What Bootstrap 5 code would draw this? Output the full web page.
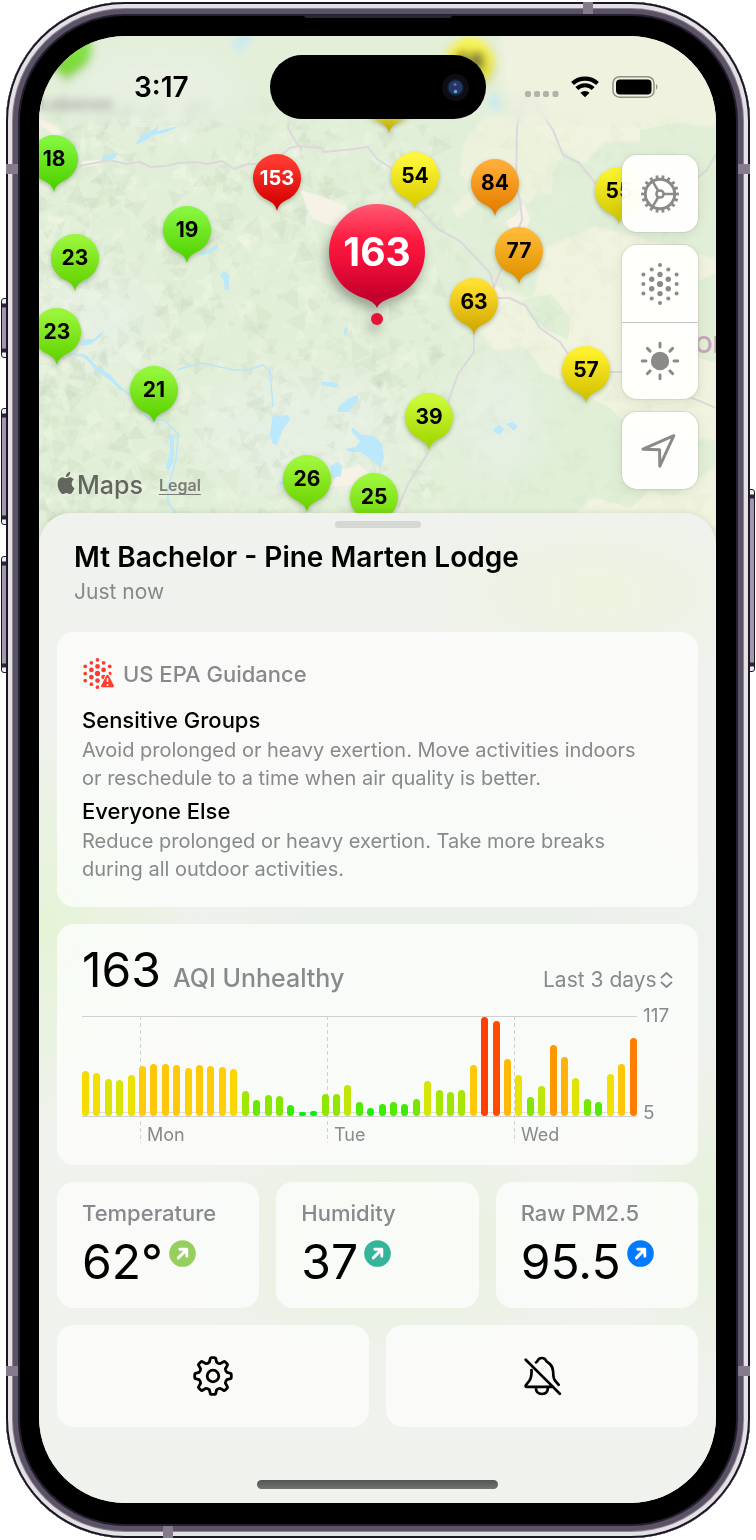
<!DOCTYPE html>
<html lang="en">
<head>
<meta charset="utf-8">
<meta name="viewport" content="width=device-width, initial-scale=1">
<title>Air quality map</title>
<link href="https://cdn.jsdelivr.net/npm/bootstrap@5.3.0/dist/css/bootstrap.min.css" rel="stylesheet">
<style>
  body { font-family: Inter, "Liberation Sans", sans-serif; background: #fff; color: #000; }
  button { font-family: inherit; }

  /* Device */
  .device {
    margin: 2px 6px; padding: 34px 34px 35px 33px; border-radius: 119px; background: #000;
    box-shadow: inset 0 0 0 2px #1c1628, inset 0 0 0 6px #e4e1e3, inset 0 0 0 7px #8d8494,
      inset 0 0 0 12px #5b5265, inset 0 0 0 14px #241f2e;
  }
  .screen { border-radius: 86px; overflow: hidden; background: #eff2ec; isolation: isolate; }
  .side-key {
    position: absolute; width: 6px; border: 1px solid #1c1628;
    background: linear-gradient(#eee 0 4px, #2a2434 5px 8px, #a29aaa 9px calc(100% - 9px), #2a2434 calc(100% - 8px) calc(100% - 5px), #eee calc(100% - 4px));
  }
  .key-left { left: -5px; border-radius: 3px 0 0 3px; }
  .key-right { right: -5px; border-radius: 0 3px 3px 0; }
  .key-action { top: 296px; height: 60px; }
  .key-up { top: 406px; height: 117px; }
  .key-down { top: 554px; height: 117px; }
  .key-power { top: 487px; height: 183px; }
  .band-v, .band-h { position: absolute; background: #857b8c; }
  .band-v { width: 12px; height: 10px; }
  .band-h { width: 10px; height: 12px; }
  .speaker { position: absolute; top: 13px; left: 50%; width: 148px; height: 3px; margin-left: -74px; background: #2b2732; border-radius: 0 0 4px 4px; }

  /* Map */
  .map-view { filter: saturate(1); } /* keeps the haze from sampling the bezel behind the screen */
  .map-art { position: absolute; top: 0; left: 0; width: 100%; height: calc(100% + 36px); }
  .pins { position: absolute; inset: 0; }
  .pin {
    position: absolute; width: 48px; height: 58px; margin: -24px 0 0 -24px; padding: 0; border: 0; background: none;
    font-size: 21px; line-height: 48px; font-weight: 700; color: #000; text-align: center;
    filter: drop-shadow(0 2px 2px rgba(60, 80, 50, .35));
  }
  .pin svg { position: absolute; top: 0; left: 0; width: 100%; height: 100%; overflow: visible; }
  .pin span { position: absolute; top: 0; left: 0; right: 0; }
  .pin.three { font-size: 20px; color: #fff; }
  .pin.selected { width: 96px; height: 124px; margin: -48px 0 0 -48px; font-size: 39px; line-height: 96px; color: #fff; filter: drop-shadow(-3px 7px 6px rgba(50, 60, 50, .42)); }
  .top-haze { position: absolute; top: 0; left: 0; right: 0; height: 92px; backdrop-filter: blur(4px); background: rgba(236, 241, 226, .2);
    -webkit-mask-image: linear-gradient(#000 85%, transparent); mask-image: linear-gradient(#000 85%, transparent); }
  .status { padding: 19px 57px 0; display: grid; grid-template-columns: minmax(0, 1fr) 216px minmax(0, 1fr); }
  .clock { font-size: 28px; font-weight: 600; line-height: 64px; padding-left: 38px; }
  .island { height: 64px; border-radius: 32px; background: #000; padding-right: 17px; }
  .lens { width: 27px; height: 27px; }
  .map-foot { padding: 36px 18px 24px; }
  .attribution { color: #63665f; line-height: 28px; margin-bottom: -10px; }
  .brand-word { font-size: 25px; font-weight: 500; padding-left: 2px; }
  .legal { font-size: 16px; font-weight: 600; color: #7b7e77; text-underline-offset: 3px; }
  .tools { width: 76px; gap: 13px; }
  .tool-box { background: rgba(255, 255, 253, .97); border-radius: 15px; box-shadow: 0 0 1px 1px rgba(170, 175, 160, .3), 0 3px 12px rgba(100, 110, 80, .14); overflow: hidden; }
  .tool { height: 77px; width: 100%; padding: 0; border: 0; background: none; color: #8a8a88; display: grid; place-items: center; }
  .tool + .tool { border-top: 1px solid #c6c7c4; }
  .tool svg { width: 42px; height: 42px; }

  /* Sheet */
  .sheet {
    border-radius: 32px 32px 0 0; padding: 8px 18px 14px; box-shadow: 0 0 6px rgba(80, 90, 70, .16);
    background:
      radial-gradient(ellipse 160px 200px at 0 42%, #e5f3d6, transparent),
      radial-gradient(ellipse 240px 120px at 52% 74%, #e8f2dc, transparent),
      radial-gradient(ellipse 110px 170px at 100% 71%, #e6f2db, transparent),
      radial-gradient(ellipse 190px 90px at 82% 8%, #eef3df, transparent),
      radial-gradient(ellipse 320px 220px at 60% 45%, #e8f1e8, transparent),
      #eff2ed;
  }
  .grabber { width: 86px; height: 7px; border: 0; padding: 0; border-radius: 4px; background: #d4d7d2; }
  .place { padding: 11px 17px 26px; }
  .place-name { font-size: 28px; font-weight: 600; line-height: 36px; margin: 0 0 3px; }
  .place-time { font-size: 21px; line-height: 28px; color: #86888a; }
  .stack { display: grid; gap: 17px; }
  .trio { display: grid; grid-template-columns: repeat(3, minmax(0, 1fr)); gap: 17px; }
  .duo { display: grid; grid-template-columns: repeat(2, minmax(0, 1fr)); gap: 17px; }
  .tile { background: rgba(253, 254, 252, .78); border: 0; border-radius: 17px; }
  .muted { color: #88898c; }
  .guide { padding: 26px 25px 24px; }
  .guide-head { font-size: 22px; font-weight: 500; line-height: 32px; margin: 0 0 16px; gap: 8px; }
  .guide h3 { font-size: 22px; font-weight: 500; line-height: 28px; margin: 0 0 2px; }
  .guide p { font-size: 20px; line-height: 28px; margin: 0 0 5px; padding-right: 20px; }
  .guide p:last-child { margin: 0; }
  .history { padding: 22px 25px; }
  .figure-lg { font-size: 48px; line-height: 48px; font-weight: 400; }
  .aqi-word { font-size: 25px; font-weight: 500; line-height: 32px; }
  .range { font-size: 21px; line-height: 26px; gap: 3px; }
  .range select { appearance: none; border: 0; background: none; padding: 0; color: inherit; font: inherit; }
  .plot-row { margin-top: 22px; display: grid; grid-template-columns: minmax(0, 1fr) 36px; }
  .plot { height: 127px; position: relative; }
  .bars { height: 101px; border-top: 1px solid #cfd0cf; border-bottom: 1px solid #cfd0cf; position: relative; }
  .bars::before { content: ""; position: absolute; left: 0; right: 0; bottom: 3px; border-top: 1px solid #dcdddc; }
  .bar { width: 7px; border-radius: 4px; position: relative; }
  .day { position: absolute; top: 0; bottom: 0; padding: 106px 0 0 7px; font-size: 18px; line-height: 26px; color: #88898c;
    background: repeating-linear-gradient(#d0d1d0 0 4px, transparent 4px 7px) 0 0 / 1px 100% no-repeat; }
  .scale { height: 117px; font-size: 19px; line-height: 20px; padding-left: 6px; margin-top: -10px; }
  .stat { padding: 17px 25px 22px; }
  .stat dt { font-size: 22px; line-height: 28px; font-weight: 500; margin-bottom: 11px; white-space: nowrap; }
  .stat dd { margin: 0; gap: 6px; }
  .trend { width: 27px; height: 27px; margin-top: 2px; }
  .action { height: 102px; color: #000; display: grid; place-items: center; }
  .home-bar { width: 241px; height: 9px; border-radius: 5px; background: linear-gradient(#535652, #71736f); margin: 53px auto 0; }
</style>
</head>
<body>
<svg width="0" height="0" class="position-absolute" aria-hidden="true">
  <defs>
    <symbol id="particles" viewBox="-21 -21 42 42">
      <g fill="currentColor">
        <circle r="3.1"/><circle cy="-9.6" r="2.7"/><circle cy="9.6" r="2.7"/>
        <circle cx="-8.3" cy="-4.8" r="2.7"/><circle cx="8.3" cy="-4.8" r="2.7"/><circle cx="-8.3" cy="4.8" r="2.7"/><circle cx="8.3" cy="4.8" r="2.7"/>
        <circle cy="-19" r="2"/><circle cy="19" r="2"/>
        <circle cx="-8.3" cy="-14.4" r="2"/><circle cx="8.3" cy="-14.4" r="2"/><circle cx="-8.3" cy="14.4" r="2"/><circle cx="8.3" cy="14.4" r="2"/>
        <circle cx="-16.6" cy="-9.6" r="2"/><circle cx="16.6" cy="-9.6" r="2"/><circle cx="-16.6" r="2"/><circle cx="16.6" r="2"/><circle cx="-16.6" cy="9.6" r="2"/><circle cx="16.6" cy="9.6" r="2"/>
      </g>
    </symbol>
    <symbol id="particles-bold" viewBox="-21 -21 42 42">
      <g fill="currentColor">
        <circle r="3.6"/><circle cy="-9.6" r="3.2"/><circle cy="9.6" r="3.2"/>
        <circle cx="-8.3" cy="-4.8" r="3.200"/><circle cx="8.3" cy="-4.8" r="3.200"/><circle cx="-8.3" cy="4.8" r="3.200"/><circle cx="8.3" cy="4.8" r="3.200"/>
        <circle cy="-18.5" r="2.500"/><circle cy="18.5" r="2.500"/>
        <circle cx="-8.3" cy="-14.4" r="2.500"/><circle cx="8.3" cy="-14.4" r="2.500"/><circle cx="-8.3" cy="14.4" r="2.500"/>
        <circle cx="-16.6" cy="-9.6" r="2.500"/><circle cx="16.6" cy="-9.6" r="2.500"/><circle cx="-16.6" r="2.500"/><circle cx="16.6" r="2.500"/><circle cx="-16.6" cy="9.6" r="2.500"/>
      </g>
    </symbol>
    <symbol id="arrow-ne" viewBox="0 0 27 27">
      <circle cx="13.5" cy="13.5" r="13.3" fill="currentColor"/>
      <path d="M9.300 17.900 17.300 9.900M10.800 9.300H17.800v7" fill="none" stroke="#fff" stroke-width="2.9" stroke-linecap="round" stroke-linejoin="round"/>
    </symbol>
  </defs>
</svg>

<div class="device position-relative">
  <i class="side-key key-left key-action"></i><i class="side-key key-left key-up"></i><i class="side-key key-left key-down"></i><i class="side-key key-right key-power"></i>
  <i class="band-v" style="left:0;top:162px"></i><i class="band-v" style="right:0;top:162px"></i>
  <i class="band-v" style="left:0;bottom:162px"></i><i class="band-v" style="right:0;bottom:162px"></i>
  <i class="band-h" style="right:157px;top:0"></i><i class="band-h" style="left:157px;bottom:0"></i>
  <i class="speaker"></i>

  <main class="screen">
    <section class="map-view position-relative" aria-label="Map">
      <svg class="map-art" viewBox="39 36 677 513" preserveAspectRatio="xMidYMin slice" aria-hidden="true">
        <defs><filter id="soft"><feGaussianBlur stdDeviation="14"/></filter><filter id="edge"><feGaussianBlur stdDeviation="1"/></filter><filter id="melt"><feGaussianBlur stdDeviation="0.7"/></filter></defs>
        <rect x="39" y="36" width="677" height="513" fill="#e2efd8"/>
        <g fill="#f0f3df" filter="url(#edge)">
          <path d="M500 36h216v90l-40 2-32 14-40 0-20 22-44-30-26-20-14-38z"/>
          <path d="M492 112l22 6 30 16 18 22-10 20 0 20-14-6-10 14-22-12-26 8-22 18-6-8 20-22-12-14 4-30 12-18z" opacity=".8"/>
          <path d="M545 248l50-22 40 10 81 24v180l-60 0-46-14-20-22-36-18-30-40-28 6-18-24 10-30 20-8 24 10z"/>
          <path d="M590 500l34-14 50 10 42-30v60H560z"/>
        </g>
        <g fill="#e0efd6">
          <path d="M640 130l40-8 36 10v70l-24 10-50-20z"/><path d="M522 300l30-6 18 24-2 22-20-10-20-14z"/><path d="M690 285l26-12v90l-20-6-10-30z"/>
          <path d="M520 372l30 2 20 12 40 22 20 20 20 4 10 50-30 26-40-12-60 16-40-60z"/>
        </g>
        <g fill="#e6f0e2" filter="url(#soft)"><ellipse cx="500" cy="420" rx="42" ry="60"/><ellipse cx="160" cy="90" rx="80" ry="40"/><ellipse cx="300" cy="430" rx="100" ry="60"/><ellipse cx="100" cy="320" rx="50" ry="50"/></g>
        <g id="relief" filter="url(#melt)"></g>
        <g fill="#f6f3e6"><path d="M300 190l26 8 20 8 10 20-24 0-20-8z"/><path d="M340 470l20-5 8 8-14 12-24 2z"/><path d="M524 203l6 16-4 12-14 2-6-12 10-6z"/><path d="M489 282l12 6 6 12-12 14z"/><path d="M82 161l18-1-1 5-16 2z"/><path d="M39 118l14 6 8 8-6 4-16-12z"/></g>
        <g fill="none" stroke="#dcd8db" stroke-width="2" stroke-linejoin="round">
          <path d="M80 166l30-6 16 4 14-2 10 5 16-1 12-3 16-1 14 2 14-3 12 8 14-5 22 0 20-16 8-2 24 2 2 4 30-3 14-2 9 12 22 14M418 207l20 22 22 12 30 32 4 14M527 90l-10 36-1 60 4 14 2 20-26 62-8 20"/>
          <path d="M533 100l20 30 10 25 16 8 18 22M498 298h12l16 8 14 22 20 14 8 12M474 330v22l-16 22-12 34-4 22M430 450l-22 34-10 24M610 372h14M690 397l26 11M697 178l10-8 9-16"/>
          <path d="M302 150l-6-8-8-14 2-14"/>
        </g>
        <g fill="none" stroke="#bce6f8" stroke-width="1.6" stroke-linejoin="round">
          <path d="M177 371l2-2 23-6 32 7 14 0 15-5 7 6 3 36M70 354l14 2 12 12 16 12 16 14 14 4 2 16 6 6 14 0 14 14-2 26-8 28 0 14 8 12"/>
        </g>
        <g fill="#bce8fb">
          <path d="M135 144l8-10 12-5 4-5-2 7 22-5-12 6-16 4-4 4-10 4z"/><path d="M102 157l9-3 7-1-3 5-12 2z"/><path d="M200 253l10-4 8-5 0 4-6 4-11 4z"/><path d="M220 275l4-4 5 4 0 14-4 1-1-9z"/>
          <path d="M80 343l6-4 8 0 6-6 5-3-6 8-8 6-9 2z"/><path d="M78 353l8 2 12 12 12 7 8 10 8 8-6-2-10-10-14-9-8-10z"/>
          <path d="M272 418l4-4 4 2 8-1 2 4-8 12-5 14-5-2-2-10z"/><path d="M321 382l12 0 5 3-2 3-8-2-7-1z"/><path d="M339 406l10-8 9-3 0 6-10 11-11 0z"/><path d="M344 329l4-2 0 4-4 4z"/>
          <path d="M345 449l11-2 4-6-8-9 0-5 10 8 12 1 8 8 2 14-4 10-8-8-12-8-10 0z"/><path d="M330 466l8-4 4 4-1 10-9 2z"/><path d="M278 481l8 0 0 5-6-1z"/><path d="M170 434l12 2-8 2 0 24-6 10-2-6 4-14z"/>
          <path d="M494 428l5-3 5 4-4 6-6-3zM506 424l6-2 6 4-4 5z"/><path d="M489 96l8-2 4 14-10 3z"/><path d="M232 42l14-6 6 4-14 12z"/>
        </g>
        <text x="41" y="110" font-size="17" font-weight="700" fill="#9a939a">Lebanon</text>
        <text x="695" y="353" font-size="23" font-weight="600" fill="#c8a3bd">OR</text>
      </svg>
      <div class="pins" id="pins"></div>
      <div class="top-haze"></div>

      <div class="status position-relative align-items-center">
        <div class="clock">3:17</div>
        <div class="island d-flex align-items-center justify-content-end">
          <svg class="lens" viewBox="0 0 27 27" aria-hidden="true"><circle cx="13.5" cy="13.5" r="13.5" fill="#0d0e12"/><circle cx="13.5" cy="13.5" r="8.5" fill="#121c33"/><circle cx="13.5" cy="13.5" r="7" fill="#1d3c68"/><circle cx="13.5" cy="13.5" r="4" fill="#27365f"/><circle cx="13" cy="10.500" r="1.500" fill="#6f62b8"/><circle cx="13.500" cy="17.500" r="1.700" fill="#6ea8dc"/></svg>
        </div>
        <svg class="ms-auto" width="134" height="26" viewBox="0 0 134 26" role="img" aria-label="Wi-Fi on, battery full">
          <g fill="#b0b4a8"><rect x="0" y="17" width="6" height="6" rx="2"/><rect x="9" y="17" width="6" height="6" rx="2"/><rect x="18" y="17" width="6" height="6" rx="2"/><rect x="27.500" y="17" width="6" height="6" rx="2"/></g>
          <g fill="none" stroke="#000" stroke-width="4.200"><path d="M47.500 9.500a18.500 18.500 0 0 1 25 0"/><path d="M51.800 14.500a12 12 0 0 1 16.400 0"/></g><path d="M60 23.300l-4.600-4.500a6.600 6.600 0 0 1 9.200 0z"/>
          <rect x="88" y="2.700" width="41" height="20.500" rx="6.500" fill="none" stroke="#8f9289" stroke-width="1.500"/><rect x="91" y="5.500" width="35.500" height="15" rx="4"/><path d="M131 10q3 2.500 0 6z" fill="#8f9289"/>
        </svg>
      </div>

      <div class="map-foot position-relative d-flex justify-content-between align-items-end">
        <div class="attribution d-flex align-items-center">
          <svg width="18" height="22" viewBox="1 0 14 16" preserveAspectRatio="none" fill="currentColor" class="mb-1" aria-hidden="true"><path d="M11.182.008C11.148-.03 9.923.023 8.857 1.180c-1.066 1.156-.902 2.482-.878 2.516s1.520.087 2.475-1.258.762-2.391.728-2.430m3.314 11.733c-.048-.096-2.325-1.234-2.113-3.422s1.675-2.789 1.698-2.854-.597-.790-1.254-1.157a3.700 3.700 0 0 0-1.563-.434c-.108-.003-.483-.095-1.254.116-.508.139-1.653.589-1.968.607-.316.018-1.256-.522-2.267-.665-.647-.125-1.333.131-1.824.328-.490.196-1.422.754-2.074 2.237-.652 1.482-.311 3.830-.067 4.560s.625 1.924 1.273 2.796c.576.984 1.340 1.667 1.659 1.899s1.219.386 1.843.067c.502-.308 1.408-.485 1.766-.472.357.013 1.061.154 1.782.539.571.197 1.111.115 1.652-.105.541-.221 1.324-1.059 2.238-2.758q.520-1.185.473-1.282"/></svg>
          <span class="brand-word">Maps</span>
          <a class="legal ms-3" href="#">Legal</a>
        </div>
        <div class="tools d-flex flex-column">
          <div class="tool-box"><button class="tool" type="button" aria-label="Settings">
            <svg viewBox="-21 -21 42 42" fill="none" stroke="currentColor" aria-hidden="true"><circle r="14.700" stroke-width="2.900"/><circle r="17.200" stroke-width="3.400" pathLength="180" stroke-dasharray="4.600 5.400" stroke-dashoffset="2.300"/><circle r="3.600" stroke-width="2.500"/><path d="M4 0H15M-2-3.500-7.500-12.800M-2 3.500-7.500 12.800" stroke-width="2.500"/></svg>
          </button></div>
          <div class="tool-box">
            <button class="tool" type="button" aria-label="Air quality layer"><svg aria-hidden="true"><use href="#particles"/></svg></button>
            <button class="tool" type="button" aria-label="Outdoor sensors">
              <svg viewBox="-21 -21 42 42" aria-hidden="true"><circle r="9.200" fill="currentColor"/><path d="M0-14v-3.800M0 14v3.800M-14 0h-3.800M14 0h3.800M-9.900-9.900l-2.700-2.700M9.900 9.900l2.700 2.700M-9.900 9.900l-2.700 2.700M9.900-9.900l2.700-2.700" stroke="currentColor" stroke-width="2.900" stroke-linecap="round"/></svg>
            </button>
          </div>
          <div class="tool-box"><button class="tool" type="button" aria-label="My location">
            <svg viewBox="-21 -21 42 42" fill="none" stroke="currentColor" stroke-width="3" stroke-linejoin="round" aria-hidden="true"><path d="M13.800-15.300-17-1.800-.4-1.300-.2 15.200z"/></svg>
          </button></div>
        </div>
      </div>
    </section>

    <section class="sheet position-relative">
      <button class="grabber d-block mx-auto" type="button" aria-label="Resize panel"></button>
      <header class="place">
        <h1 class="place-name">Mt Bachelor - Pine Marten Lodge</h1>
        <div class="place-time">Just now</div>
      </header>

      <div class="stack">
        <article class="tile guide">
          <h2 class="guide-head muted d-flex align-items-center">
            <svg width="33" height="32" viewBox="0 0 33 32" color="#ff3b30" aria-hidden="true"><use href="#particles-bold" x="0" y="0" width="31" height="31"/><path d="M25.500 15 33 30.500H18z" fill="#f9faf7" stroke="#f9faf7" stroke-width="2"/><path d="M25.500 18 30.700 28H20.300z" fill="#ff3b30" stroke="#ff3b30" stroke-width="2.500" stroke-linejoin="round"/><path d="M25.500 20v4M25.500 26v1.700" stroke="#fff" stroke-width="1.600"/></svg>
            <span>US EPA Guidance</span>
          </h2>
          <h3>Sensitive Groups</h3>
          <p class="muted">Avoid prolonged or heavy exertion. Move activities indoors or reschedule to a time when air quality is better.</p>
          <h3>Everyone Else</h3>
          <p class="muted">Reduce prolonged or heavy exertion. Take more breaks during all outdoor activities.</p>
        </article>

        <article class="tile history">
          <div class="d-flex align-items-baseline">
            <span class="figure-lg">163</span>
            <span class="aqi-word muted ms-2 ps-1">AQI Unhealthy</span>
            <div class="range muted ms-auto d-flex align-items-center">
              <select aria-label="Time range"><option>Last 3 days</option><option>Last day</option></select>
              <svg width="13" height="18" viewBox="0 0 13 18" fill="none" stroke="currentColor" stroke-width="1.800" stroke-linecap="round" stroke-linejoin="round" aria-hidden="true"><path d="M1.500 6.500l5-4.500 5 4.500M1.500 11.500l5 4.500 5-4.500"/></svg>
            </div>
          </div>
          <div class="plot-row">
            <div class="plot">
              <div id="days"></div>
              <div class="bars d-flex justify-content-between align-items-end" id="bars"></div>
            </div>
            <div class="scale muted d-flex flex-column justify-content-between"><span>117</span><span>5</span></div>
          </div>
        </article>

        <dl class="trio mb-0">
          <div class="tile stat"><dt class="muted">Temperature</dt><dd class="d-flex align-items-start"><span class="figure-lg">62°</span><svg class="trend" color="#97cf5e" aria-hidden="true"><use href="#arrow-ne"/></svg></dd></div>
          <div class="tile stat"><dt class="muted">Humidity</dt><dd class="d-flex align-items-start"><span class="figure-lg">37</span><svg class="trend" color="#33b49b" aria-hidden="true"><use href="#arrow-ne"/></svg></dd></div>
          <div class="tile stat"><dt class="muted">Raw PM2.5</dt><dd class="d-flex align-items-start"><span class="figure-lg">95.5</span><svg class="trend" color="#007aff" aria-hidden="true"><use href="#arrow-ne"/></svg></dd></div>
        </dl>

        <div class="duo">
          <button class="tile action" type="button" aria-label="Sensor settings">
            <svg width="42" height="42" viewBox="-21 -21 42 42" fill="none" stroke="currentColor" stroke-width="2.800" stroke-linejoin="round" aria-hidden="true"><circle r="5.800"/><path d="M-3.600-13.900-2.700-17.600Q-2.400-18.300-1.500-18.300H1.500Q2.400-18.300 2.700-17.600L3.600-13.900Q5.500-12.200 7.280-12.370L10.500-14.300Q11.400-14.900 12-14.300L14.300-12Q14.900-11.400 14.300-10.500L12.370-7.280Q12.200-5.500 13.900-3.600L17.600-2.700Q18.300-2.400 18.300-1.500V1.500Q18.300 2.400 17.600 2.700L13.900 3.600Q12.200 5.500 12.370 7.280L14.300 10.500Q14.900 11.400 14.300 12L12 14.300Q11.400 14.900 10.500 14.300L7.280 12.370Q5.500 12.200 3.600 13.900L2.700 17.600Q2.400 18.300 1.500 18.300H-1.500Q-2.400 18.300-2.700 17.600L-3.600 13.900Q-5.500 12.200-7.280 12.370L-10.500 14.300Q-11.400 14.900-12 14.300L-14.300 12Q-14.900 11.400-14.300 10.500L-12.370 7.280Q-12.200 5.500-13.900 3.600L-17.600 2.700Q-18.300 2.400-18.300 1.500V-1.500Q-18.300-2.400-17.600-2.700L-13.900-3.600Q-12.200-5.500-12.370-7.280L-14.300-10.500Q-14.900-11.400-14.300-12L-12-14.300Q-11.400-14.900-10.500-14.300L-7.280-12.370Q-5.500-12.200-3.600-13.900Z"/></svg>
          </button>
          <button class="tile action" type="button" aria-label="Notifications off">
            <svg width="40" height="40" viewBox="-1 0 40 40" fill="none" stroke="currentColor" stroke-width="2.700" stroke-linecap="round" stroke-linejoin="round" aria-hidden="true"><path d="M2.700 3.700 36.800 37.700M13 6.400Q14.200 5.800 14.700 4.500Q16 2 18.900 2T23 4.500Q23.500 5.800 25 6.500Q29.800 9.500 30.200 16Q30.200 22 32 24.500L35.700 28.800M8.500 14Q8.800 21.500 6.200 25L3 29Q2 30.800 3.500 30.800H29.500M12.800 31.500Q13 38 18.900 38T25 31.500"/></svg>
          </button>
        </div>
      </div>
      <div class="home-bar"></div>
    </section>
  </main>
</div>

<script src="https://cdn.jsdelivr.net/npm/bootstrap@5.3.0/dist/js/bootstrap.bundle.min.js"></script>
<script>
  // Sensor pins: label, map x, map y, top colour, bottom colour
  const MAP_WIDTH = 677;
  const pins = [
    ['', 28, 12, '#7be83a', '#58d000'], ['58', 431, 26, '#fff62a', '#d8cf00'], ['', 350, 64, '#ffe92a', '#c8b400'],
    ['18', 15, 123, '#82f53c', '#4fd200'], ['153', 238, 142, '#ff3a30', '#d40000'], ['54', 376, 140, '#fdf63a', '#dccf00'],
    ['84', 456, 147, '#ffab35', '#e57f00'], ['55', 580, 155, '#f9f22e', '#d4c800'], ['19', 148, 194, '#86f53e', '#52d400'],
    ['77', 480, 215, '#ffb935', '#e09200'], ['23', 36, 222, '#98f53a', '#62d400'], ['63', 435, 266, '#ffdf2f', '#d3aa00'],
    ['23', 18, 296, '#98f53a', '#62d400'], ['57', 547, 334, '#fff02e', '#d2c200'], ['21', 115, 354, '#94f63a', '#5ad200'],
    ['39', 390, 381, '#ccf936', '#a2d800'], ['26', 268, 443, '#9ff63a', '#6cd400'], ['25', 335, 461, '#9cf63a', '#68d400']
  ];
  const tail = 'M24 57C22.500 50 18 47.500 11 44.200A24 24 0 1 1 37 44.200C30 47.500 25.500 50 24 57Z';
  const pinMarkup = (p, i) => `<button type="button" class="pin ${p[0].length > 2 ? 'three' : ''}" style="left:${p[1] / MAP_WIDTH * 100}%;top:${p[2]}px" aria-label="AQI ${p[0]}">
    <svg viewBox="0 0 48 58" aria-hidden="true"><linearGradient id="tone${i}" x2="0" y2="1"><stop offset=".1" stop-color="${p[3]}"/><stop offset=".9" stop-color="${p[4]}"/></linearGradient><path d="${tail}" fill="url(#tone${i})"/></svg><span>${p[0]}</span></button>`;
  document.getElementById('pins').innerHTML = pins.map(pinMarkup).join('') +
    `<button type="button" class="pin selected" style="left:${338 / MAP_WIDTH * 100}%;top:216px" aria-label="AQI 163, selected">
    <svg viewBox="0 0 96 124" aria-hidden="true"><linearGradient id="toneSel" x2="0" y2="1"><stop offset="0" stop-color="#ff5a72"/><stop offset=".35" stop-color="#fc1a40"/><stop offset=".6" stop-color="#ea0c38"/><stop offset=".9" stop-color="#c4002c"/></linearGradient>
    <path d="M48 104C45 97 38 95.500 29 92A48 48 0 1 1 67 92C58 95.500 51 97 48 104Z" fill="url(#toneSel)"/><circle cx="48" cy="115" r="6" fill="#e81238"/></svg><span>163</span></button>`;

  // Shaded relief facets, seeded so that the hills stay put between loads
  let seed = 7;
  const rnd = () => (seed = (seed * 16807) % 2147483647) / 2147483647;
  let facets = '';
  for (let i = 0; i < 2200; i++) {
    const x = 39 + Math.pow(rnd(), 1.3) * 660, y = 105 + rnd() * 435, s = 7 + rnd() * 13;
    const turn = rnd() * 6.28;
    const point = k => `${(x + Math.cos(turn + k * 2.1) * s * (.4 + rnd() * .5)).toFixed(1)},${(y + Math.sin(turn + k * 2.1) * s * (.4 + rnd() * .5)).toFixed(1)}`;
    const light = rnd() > .5, fade = x > 440 ? .3 : 1;
    facets += `<polygon points="${point(0)} ${point(1)} ${point(2)}" fill="${light ? '#f3f7ea' : '#bfceb5'}" opacity="${((.06 + rnd() * (light ? .24 : .17)) * fade).toFixed(2)}"/>`;
  }
  document.getElementById('relief').innerHTML = facets;

  // Hourly history, as bar heights on a 100-unit scale
  const history = [45,43,37,36,41,51,53,53,52,49,52,51,50,47,25,16,21,20,11,4,5,22,22,31,14,8,12,14,12,17,35,26,24,26,52,100,96,58,41,19,30,72,60,38,17,14,42,53,79];
  const ramp = [[4,0,240,20],[12,60,235,0],[17,115,232,0],[22,145,230,0],[31,195,230,10],[37,220,228,5],[42,240,225,0],[47,250,215,0],[52,255,201,10],[60,255,178,10],[72,255,152,0],[79,255,125,0],[100,255,62,0]];
  const tone = v => {
    const n = Math.max(1, ramp.findIndex(r => r[0] >= v)), a = ramp[n - 1], b = ramp[n], t = Math.max(0, (v - a[0]) / (b[0] - a[0]));
    return `rgb(${[1, 2, 3].map(k => Math.round(a[k] + (b[k] - a[k]) * t)).join()})`;
  };
  document.getElementById('bars').innerHTML = history.map(v => `<div class="bar" style="height:${v}%;background:${tone(v)}"></div>`).join('');
  document.getElementById('days').innerHTML = [['Mon', 58], ['Tue', 245], ['Wed', 432]].map(d => `<div class="day" style="left:${d[1] / 555 * 100}%">${d[0]}</div>`).join('');
</script>
</body>
</html>
